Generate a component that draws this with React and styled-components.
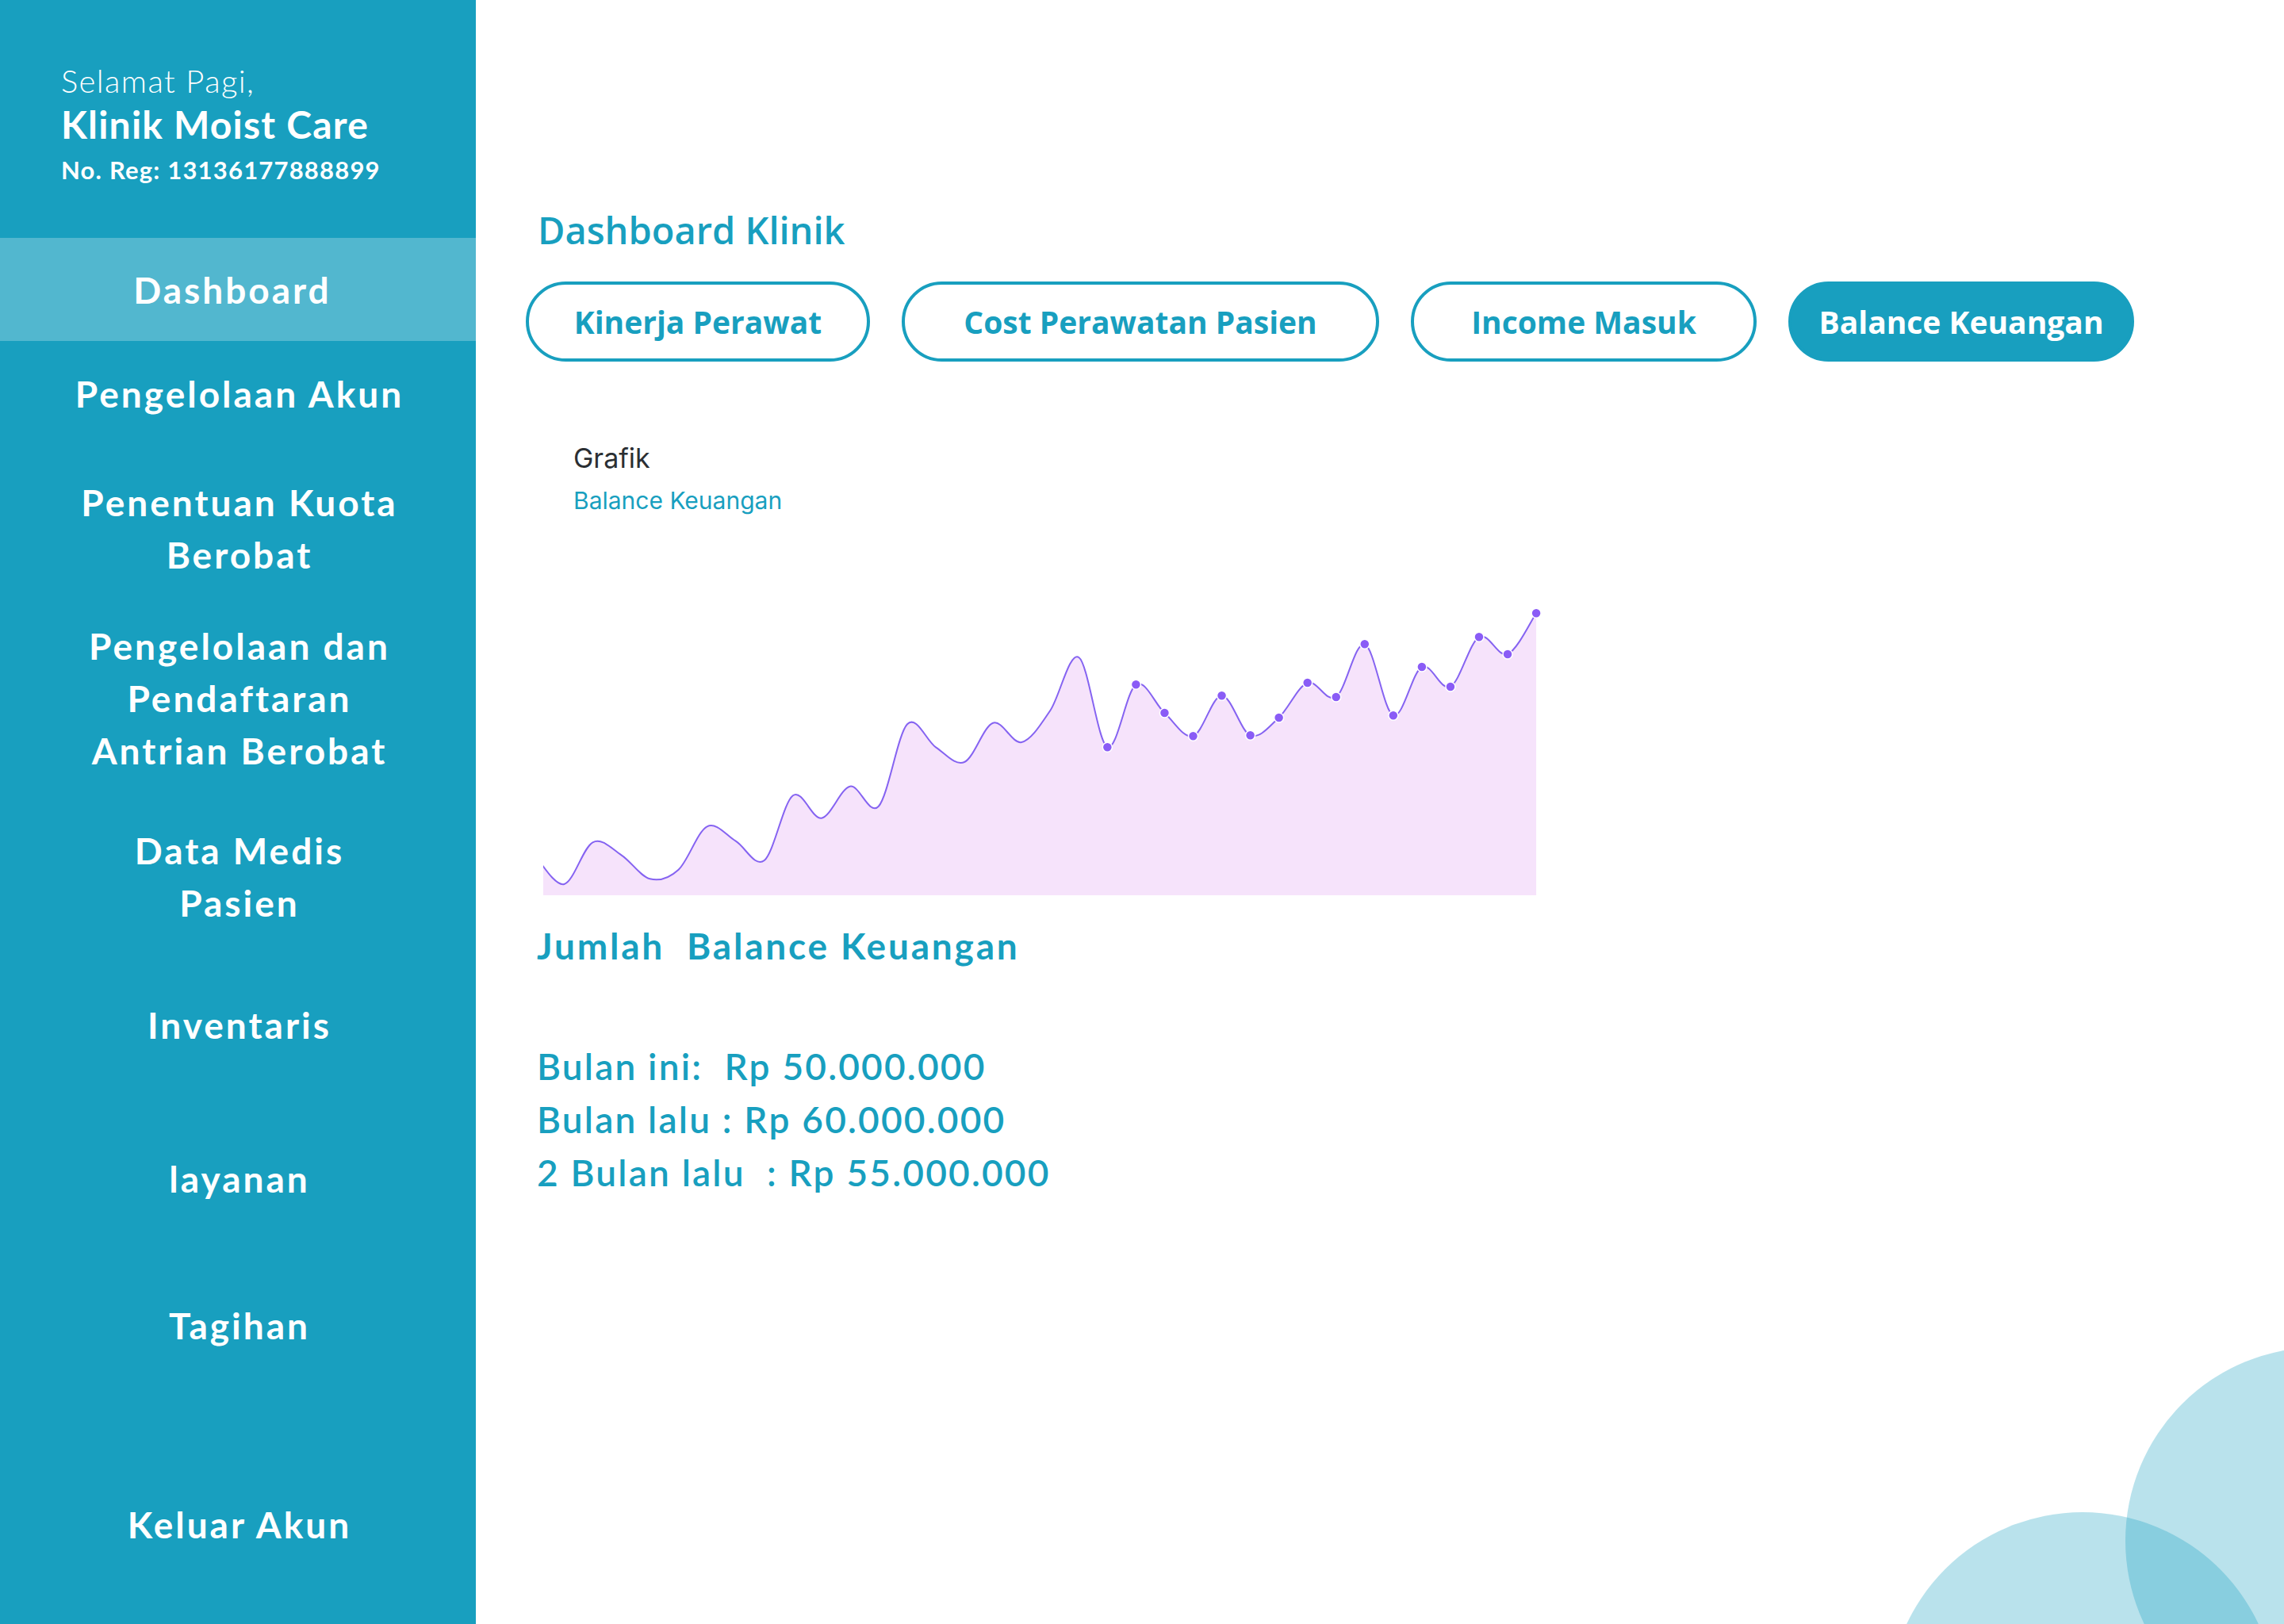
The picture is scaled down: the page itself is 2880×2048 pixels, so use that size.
import React from "react";
import styled, { createGlobalStyle } from "styled-components";

const GlobalStyle = createGlobalStyle`
  html, body {
    margin: 0;
    padding: 0;
    width: 2880px;
    height: 2048px;
    overflow: hidden;
    background: #ffffff;
    font-family: "Lato", "Noto Sans", sans-serif;
  }
  * {
    box-sizing: border-box;
  }
`;

const PRIMARY = "#189fbf";

const Page = styled.div`
  display: flex;
  width: 2880px;
  height: 2048px;
`;

const Sidebar = styled.aside`
  width: 600px;
  flex-shrink: 0;
  height: 100%;
  background: ${PRIMARY};
  color: #ffffff;
  display: flex;
  flex-direction: column;
`;

const Greeting = styled.div`
  padding: 78px 0 0 77px;
  height: 300px;
  display: flex;
  flex-direction: column;
`;

const Hello = styled.div`
  font-size: 40px;
  font-weight: 300;
  line-height: 48px;
  letter-spacing: 1.4px;
`;

const ClinicName = styled.div`
  font-size: 48px;
  font-weight: 700;
  line-height: 58px;
  margin-top: 2px;
  letter-spacing: 1.2px;
`;

const RegNo = styled.div`
  font-size: 31px;
  font-weight: 700;
  line-height: 40px;
  margin-top: 8px;
  letter-spacing: 1.2px;
`;

const ActiveItem = styled.div`
  height: 130px;
  background: rgba(255, 255, 255, 0.25);
  display: flex;
  align-items: center;
  justify-content: center;
  font-size: 46px;
  font-weight: 700;
  letter-spacing: 3px;
  padding-right: 14px;
`;

const NavItem = styled.div`
  margin-top: ${(p) => p.$gap}px;
  text-align: center;
  font-size: 46px;
  font-weight: 700;
  line-height: 66px;
  letter-spacing: 3px;
  padding: 0 16px 0 20px;
`;

const Main = styled.main`
  position: relative;
  flex: 1;
  height: 100%;
  overflow: hidden;
  padding-left: 63px;
  display: flex;
  flex-direction: column;
  align-items: flex-start;
`;

const Title = styled.h1`
  margin: 258px 0 0 15px;
  font-family: "Open Sans", "Noto Sans", sans-serif;
  font-size: 47px;
  font-weight: 600;
  line-height: 64px;
  color: ${PRIMARY};
`;

const TabRow = styled.div`
  display: flex;
  gap: 40px;
  margin-top: 33px;
`;

const Tab = styled.button`
  width: ${(p) => p.$w}px;
  height: 101px;
  border-radius: 51px;
  border: 4px solid ${PRIMARY};
  background: ${(p) => (p.$active ? PRIMARY : "#ffffff")};
  color: ${(p) => (p.$active ? "#ffffff" : PRIMARY)};
  font-family: "Open Sans", "Noto Sans", sans-serif;
  font-size: 39px;
  font-weight: 700;
  display: flex;
  align-items: center;
  justify-content: center;
  padding: 0;
  cursor: pointer;
`;

const ChartHead = styled.div`
  margin: 101px 0 0 60px;
  font-family: "Inter", "Noto Sans", sans-serif;
`;

const ChartTitle = styled.div`
  font-size: 34px;
  line-height: 41px;
  color: #2b2f33;
`;

const ChartSub = styled.div`
  font-size: 30px;
  line-height: 36px;
  margin-top: 15px;
  color: ${PRIMARY};
`;

const ChartBox = styled.div`
  margin: 91px 0 0 22px;
  width: 1262px;
  height: 392px;
`;

const SumTitle = styled.h2`
  margin: 33px 0 0 14px;
  font-size: 46px;
  font-weight: 700;
  line-height: 55px;
  letter-spacing: 2.8px;
  color: ${PRIMARY};
  white-space: pre;
`;

const SumList = styled.div`
  margin: 91px 0 0 14px;
  display: flex;
  flex-direction: column;
`;

const SumLine = styled.div`
  font-size: 46px;
  font-weight: 600;
  line-height: 67px;
  letter-spacing: 2.2px;
  color: ${PRIMARY};
  white-space: pre;
`;

const Bubble = styled.div`
  position: absolute;
  width: ${(p) => p.$size}px;
  height: ${(p) => p.$size}px;
  left: ${(p) => p.$x}px;
  top: ${(p) => p.$y}px;
  border-radius: 50%;
  background: rgba(24, 159, 191, 0.3);
  pointer-events: none;
`;

const values = [
  340, 375, 322.3, 338.3, 368.3, 356.7, 302.3, 320.7, 345, 263.3, 291.7, 251.7,
  276.7, 173.3, 202.3, 221, 171.7, 196, 156, 89, 202.3, 123.3, 159, 188.3,
  137.3, 187.3, 165, 121, 139, 72.3, 162.3, 101, 126, 63.3, 85, 33.3,
];

const STEP = 36.05;
const X0 = 26.4 - STEP;
const pts = values.map((y, i) => [X0 + i * STEP, y]);

const buildPath = (p) => {
  let d = `M${p[0][0].toFixed(1)},${p[0][1].toFixed(1)}`;
  for (let i = 0; i < p.length - 1; i++) {
    const p0 = p[i - 1] || p[i];
    const p1 = p[i];
    const p2 = p[i + 1];
    const p3 = p[i + 2] || p2;
    const c1x = p1[0] + (p2[0] - p0[0]) / 6;
    const c1y = p1[1] + (p2[1] - p0[1]) / 6;
    const c2x = p2[0] - (p3[0] - p1[0]) / 6;
    const c2y = p2[1] - (p3[1] - p1[1]) / 6;
    d += ` C${c1x.toFixed(1)},${c1y.toFixed(1)} ${c2x.toFixed(1)},${c2y.toFixed(
      1
    )} ${p2[0].toFixed(1)},${p2[1].toFixed(1)}`;
  }
  return d;
};

const linePath = buildPath(pts);
const last = pts[pts.length - 1];
const areaPath = `${linePath} L${last[0].toFixed(1)},389 L0,389 L${pts[0][0].toFixed(
  1
)},389 Z`;

const BalanceChart = () => (
  <svg width="1262" height="392" viewBox="0 0 1262 392">
    <defs>
      <clipPath id="plot">
        <rect x="0" y="0" width="1262" height="392" />
      </clipPath>
    </defs>
    <g clipPath="url(#plot)">
      <path d={areaPath} fill="#f6e3fb" />
      <path d={linePath} fill="none" stroke="#8563f1" strokeWidth="2" />
      {pts.slice(20).map(([x, y], i) => (
        <circle
          key={i}
          cx={x}
          cy={y}
          r="6"
          fill="#8a5cf6"
          stroke="#ffffff"
          strokeWidth="1.5"
        />
      ))}
    </g>
  </svg>
);

const navItems = [
  { gap: 34, lines: ["Pengelolaan Akun"] },
  { gap: 71, lines: ["Penentuan Kuota", "Berobat"] },
  { gap: 49, lines: ["Pengelolaan dan", "Pendaftaran", "Antrian Berobat"] },
  { gap: 60, lines: ["Data Medis", "Pasien"] },
  { gap: 88, lines: ["Inventaris"] },
  { gap: 128, lines: ["layanan"] },
  { gap: 119, lines: ["Tagihan"] },
  { gap: 185, lines: ["Keluar Akun"] },
];

const tabs = [
  { label: "Kinerja Perawat", w: 434 },
  { label: "Cost Perawatan Pasien", w: 602 },
  { label: "Income Masuk", w: 436 },
  { label: "Balance Keuangan", w: 436, active: true },
];

const App = () => {
  return (
    <>
      <GlobalStyle />
      <Page>
        <Sidebar>
          <Greeting>
            <Hello>Selamat Pagi,</Hello>
            <ClinicName>Klinik Moist Care</ClinicName>
            <RegNo>No. Reg: 13136177888899</RegNo>
          </Greeting>
          <ActiveItem>Dashboard</ActiveItem>
          {navItems.map((item) => (
            <NavItem key={item.lines[0]} $gap={item.gap}>
              {item.lines.map((l) => (
                <div key={l}>{l}</div>
              ))}
            </NavItem>
          ))}
        </Sidebar>
        <Main>
          <Title>Dashboard Klinik</Title>
          <TabRow>
            {tabs.map((t) => (
              <Tab key={t.label} $w={t.w} $active={t.active}>
                {t.label}
              </Tab>
            ))}
          </TabRow>
          <ChartHead>
            <ChartTitle>Grafik</ChartTitle>
            <ChartSub>Balance Keuangan</ChartSub>
          </ChartHead>
          <ChartBox>
            <BalanceChart />
          </ChartBox>
          <SumTitle>{"Jumlah  Balance Keuangan"}</SumTitle>
          <SumList>
            <SumLine>{"Bulan ini:  Rp 50.000.000"}</SumLine>
            <SumLine>{"Bulan lalu : Rp 60.000.000"}</SumLine>
            <SumLine>{"2 Bulan lalu  : Rp 55.000.000"}</SumLine>
          </SumList>
          <Bubble $size={488} $x={2080} $y={1699} />
          <Bubble $size={490} $x={1781} $y={1907} />
        </Main>
      </Page>
    </>
  );
};

export default App;
